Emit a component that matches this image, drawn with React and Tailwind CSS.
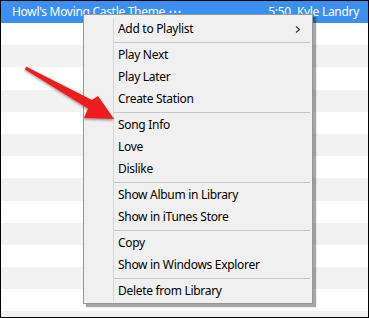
import React from 'react';

const ROWS = 14;

const MENU = [
  ['Add to Playlist', true],
  '-',
  'Play Next',
  'Play Later',
  'Create Station',
  '-',
  'Song Info',
  'Love',
  'Dislike',
  '-',
  'Show Album in Library',
  'Show in iTunes Store',
  '-',
  'Copy',
  'Show in Windows Explorer',
  '-',
  'Delete from Library',
];

function MenuItem({ label, submenu }) {
  return (
    <div className="flex h-[22px] items-center">
      <div className="w-[29px] self-stretch" />
      <div className="w-px self-stretch bg-[#d7d7d7]" />
      <span className="ml-[4px] flex-1 text-[12px] tracking-[-0.3px] text-[#000]">{label}</span>
      {submenu && (
        <svg className="mr-[11px]" width="6" height="7" viewBox="0 0 6 7">
          <path d="M1 0.5 L4.5 3.5 L1 6.5" fill="none" stroke="#333" strokeWidth="1.1" />
        </svg>
      )}
    </div>
  );
}

function Separator() {
  return (
    <div className="flex h-[4px]">
      <div className="w-[29px]" />
      <div className="w-px bg-[#d7d7d7]" />
      <div className="mr-[2px] flex flex-1 items-center">
        <div className="h-px w-full bg-[#c6c6c6]" />
      </div>
    </div>
  );
}

export default function App() {
  return (
    <div
      className="relative h-[318px] w-[369px] overflow-hidden border border-black bg-white"
      style={{ fontFamily: '"Noto Sans", "Open Sans", sans-serif' }}
    >
      <div className="flex h-[22px] items-center justify-between bg-[#3a8ff0] pl-[11px] pr-[9px] text-[12px] tracking-[-0.3px] text-white">
        <span className="flex items-center">
          Howl's Moving Castle Theme
          <span className="ml-[4px] text-[8px] tracking-[1.5px]">•••</span>
        </span>
        <div className="flex gap-[6px]">
          <span>5:50</span>
          <span>Kyle Landry</span>
        </div>
      </div>
      {Array.from({ length: ROWS }).map((_, i) => (
        <div key={i} className={i % 2 === 0 ? 'h-[22.2px] bg-white' : 'h-[22.2px] bg-[#f2f2f2]'} />
      ))}

      <div className="absolute left-[82px] top-[13px] w-[230px] border border-[#979797] bg-[#f0f0f0] pb-[1px] pt-[3px] shadow-[3px_3px_1px_rgba(0,0,0,0.35)]">
        {MENU.map((m, i) =>
          m === '-' ? (
            <Separator key={i} />
          ) : Array.isArray(m) ? (
            <MenuItem key={i} label={m[0]} submenu={m[1]} />
          ) : (
            <MenuItem key={i} label={m} />
          )
        )}
      </div>

      <svg className="absolute left-0 top-0" width="369" height="318" viewBox="0 0 369 318">
        <defs>
          <filter id="sh" x="-20%" y="-20%" width="140%" height="140%">
            <feDropShadow dx="0" dy="1.5" stdDeviation="1.2" floodColor="#000" floodOpacity="0.4" />
          </filter>
        </defs>
        <polygon
          points="25,65.5 91,99 97,95 113,118 83,117 87,107.5 24,68.5"
          fill="#ee1c1c"
          filter="url(#sh)"
        />
      </svg>
    </div>
  );
}
